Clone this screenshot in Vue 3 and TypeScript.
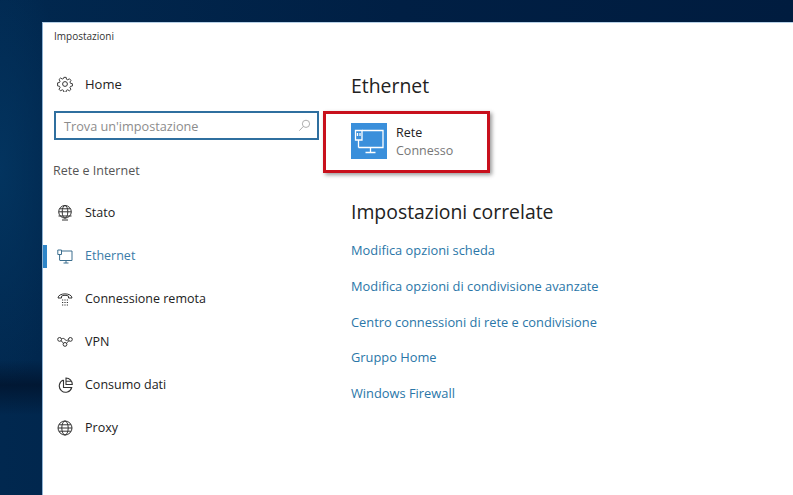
<script setup lang="ts">
const navItems = [
  { label: 'Stato', icon: 'status' },
  { label: 'Ethernet', icon: 'ethernet', active: true },
  { label: 'Connessione remota', icon: 'dialup' },
  { label: 'VPN', icon: 'vpn' },
  { label: 'Consumo dati', icon: 'usage' },
  { label: 'Proxy', icon: 'proxy' },
]

const links = [
  'Modifica opzioni scheda',
  'Modifica opzioni di condivisione avanzate',
  'Centro connessioni di rete e condivisione',
  'Gruppo Home',
  'Windows Firewall',
]
</script>

<template>
  <div class="desktop">
    <div class="window">
      <div class="titlebar">Impostazioni</div>
      <div class="body">
        <aside class="sidebar">
          <div class="home">
            <svg class="icon" viewBox="0 0 16 16" fill="none" stroke="#333" stroke-width="1">
              <circle cx="8" cy="8" r="2.4" />
              <path d="M6.8 1h2.4l.4 2 1.3.6 1.8-1.1 1.6 1.7-1.1 1.7.6 1.4 2 .4v2.4l-2 .4-.6 1.3 1.1 1.8-1.7 1.6-1.7-1.1-1.4.6-.4 2H6.8l-.4-2-1.3-.6-1.8 1.100-1.600-1.700 1.100-1.700-.6-1.400-2-.4V6.800l2-.4.6-1.300-1.100-1.800 1.700-1.600 1.700 1.100 1.400-.6z" transform="translate(.4 .4) scale(.95)" />
            </svg>
            <span>Home</span>
          </div>
          <div class="search">
            <span class="placeholder">Trova un'impostazione</span>
            <svg class="search-icon" viewBox="0 0 14 14" fill="none" stroke="#a8a8a8" stroke-width="1">
              <circle cx="8.600" cy="5.200" r="3.900" />
              <path d="M5.800 8 1.400 12.600" />
            </svg>
          </div>
          <div class="section">Rete e Internet</div>
          <nav class="nav">
            <div v-for="item in navItems" :key="item.label" class="nav-item" :class="{ active: item.active }">
              <svg class="icon" viewBox="0 0 16 16" fill="none" stroke="#333" stroke-width="1">
                <template v-if="item.icon === 'status'">
                  <circle cx="8" cy="6.800" r="6.300" />
                  <ellipse cx="8" cy="6.800" rx="2.800" ry="6.300" />
                  <path d="M1.700 6.800h12.600M2.600 3.800h10.800M1.500 11h13M5 15h6" />
                </template>
                <template v-else-if="item.icon === 'ethernet'">
                  <path d="M5 3h10v9.500H3M9 12.500v2.500M6.500 15h5" stroke="#3d6f8f" />
                  <path d="M.8 2h3.700v4.500H.8zM2.600 6.500v6" stroke="#3d6f8f" />
                </template>
                <template v-else-if="item.icon === 'dialup'">
                  <path d="M1 7C1 1.500 15 1.500 15 7H11.500V5.200C10 4 6 4 4.500 5.200V7Z" />
                  <path d="M5 9h1.200M7.400 9h1.200M9.800 9h1.200M5 11.500h1.200M7.400 11.500h1.200M9.800 11.500h1.200M5 14h1.200M7.400 14h1.200M9.800 14h1.200" stroke-width="1.200" />
                </template>
                <template v-else-if="item.icon === 'vpn'">
                  <circle cx="2.600" cy="5.400" r="1.900" />
                  <circle cx="8" cy="10.400" r="1.900" />
                  <circle cx="13.400" cy="5.400" r="1.900" />
                  <path d="M4 6.700 6.500 9.100M9.500 9.100 12 6.700M4.500 5C6 4 6.700 4.200 8 5.500c1.300 1.300 2 1.400 3.500-.3" />
                </template>
                <template v-else-if="item.icon === 'usage'">
                  <path d="M6.500 3A6.300 6.300 0 1 0 14.700 10.500H6.500V3" stroke-width="1.100" />
                  <path d="M9 1c3.500 0 6.300 2.600 6.300 6.500H9zM9 4.300h5.500" stroke-width="1.100" />
                </template>
                <template v-else>
                  <circle cx="8" cy="8" r="7" />
                  <ellipse cx="8" cy="8" rx="3.200" ry="7" />
                  <path d="M1 8h14M2 4.800h12M2 11.200h12" />
                </template>
              </svg>
              <span>{{ item.label }}</span>
            </div>
          </nav>
        </aside>
        <main class="content">
          <h1 class="title">Ethernet</h1>
          <div class="network">
            <div class="network-icon">
              <svg viewBox="0 0 36 36" fill="none" stroke="#fff" stroke-width="1.300">
                <path d="M11 7.500h21v17H7.500M19.500 24.500v5M14.500 29.500h10" />
                <path d="M4.500 7.500H11v9.500H4.500zM7.500 17v7.500M6.500 10v3M9 10v3" />
              </svg>
            </div>
            <div class="network-text">
              <div class="network-name">Rete</div>
              <div class="network-state">Connesso</div>
            </div>
            <div class="highlight"></div>
          </div>
          <h2 class="title related">Impostazioni correlate</h2>
          <a v-for="link in links" :key="link" class="link">{{ link }}</a>
        </main>
      </div>
    </div>
  </div>
</template>

<style>
html,
body {
  margin: 0;
  overflow: hidden;
}
</style>

<style scoped>
.desktop {
  width: 793px;
  height: 495px;
  box-sizing: border-box;
  padding: 22px 0 0 42px;
  background:
    linear-gradient(180deg, rgba(0, 0, 0, 0) 360px, rgba(0, 8, 25, 0.5) 385px, rgba(0, 0, 0, 0) 415px),
    radial-gradient(ellipse 70px 220px at 0 170px, #03345f 0, rgba(3, 52, 95, 0) 100%),
    linear-gradient(90deg, #01284f 0, #001f44 400px, #001c3f 100%);
  font-family: 'Open Sans', 'Noto Sans', sans-serif;
  color: #222;
}

.window {
  height: 100%;
  box-sizing: border-box;
  background: #fff;
  border-top: 1px solid #b7d0e6;
  border-left: 1px solid #8fb2d2;
  display: flex;
  flex-direction: column;
}

.titlebar {
  height: 28px;
  padding-left: 11px;
  font-size: 10px;
  line-height: 27px;
  color: #333;
}

.body {
  flex: 1;
  display: flex;
}

.sidebar {
  width: 308px;
  flex: none;
}

.home {
  display: flex;
  align-items: center;
  gap: 12px;
  height: 24px;
  margin-top: 21px;
  padding-left: 14px;
  font-size: 13px;
}

.icon {
  width: 16px;
  height: 16px;
  flex: none;
}

.search {
  display: flex;
  align-items: center;
  justify-content: space-between;
  box-sizing: border-box;
  width: 265px;
  height: 29px;
  margin: 15px 0 0 11px;
  padding: 0 6px 0 8px;
  border: 2px solid #2f6f9f;
  font-size: 12.700px;
}

.placeholder {
  color: #8c8c8c;
}

.search-icon {
  width: 13px;
  height: 13px;
}

.section {
  margin: 21px 0 0 10px;
  height: 20px;
  font-size: 12.500px;
  line-height: 20px;
  color: #555;
}

.nav {
  display: flex;
  flex-direction: column;
  margin-top: 10px;
}

.nav-item {
  position: relative;
  display: flex;
  align-items: center;
  gap: 12px;
  height: 43px;
  padding-left: 14px;
  font-size: 12.500px;
}

.nav-item.active {
  color: #3a7ca8;
}

.nav-item.active::before {
  content: '';
  position: absolute;
  left: 0;
  top: 11px;
  width: 4px;
  height: 23px;
  background: #2f86c8;
}

.content {
  flex: 1;
  display: flex;
  flex-direction: column;
  align-items: flex-start;
}

.title {
  margin: 0;
  font-size: 19.400px;
  font-weight: 400;
  line-height: 28px;
  color: #222;
}

.content > .title:first-child {
  margin-top: 21px;
}

.network {
  position: relative;
  display: flex;
  align-items: flex-start;
  gap: 9px;
  height: 36px;
  margin-top: 23px;
}

.network-icon {
  width: 36px;
  height: 36px;
  background: #3a8fdb;
}

.network-icon svg {
  display: block;
  width: 36px;
  height: 36px;
}

.network-text {
  margin-top: 1px;
}

.network-name {
  font-size: 12.500px;
  line-height: 18px;
  color: #222;
}

.network-state {
  font-size: 12.500px;
  line-height: 18px;
  color: #777;
}

.highlight {
  position: absolute;
  left: -28px;
  top: -12px;
  width: 167px;
  height: 62px;
  box-sizing: border-box;
  border: 3px solid #c8101c;
  box-shadow: 2px 2px 4px rgba(0, 0, 0, 0.4);
}

.related {
  margin-top: 39px;
}

.link {
  display: block;
  margin-top: 15.750px;
  height: 20px;
  font-size: 12.850px;
  line-height: 20px;
  color: #2a76a8;
}

.related + .link {
  margin-top: 14px;
}
</style>
